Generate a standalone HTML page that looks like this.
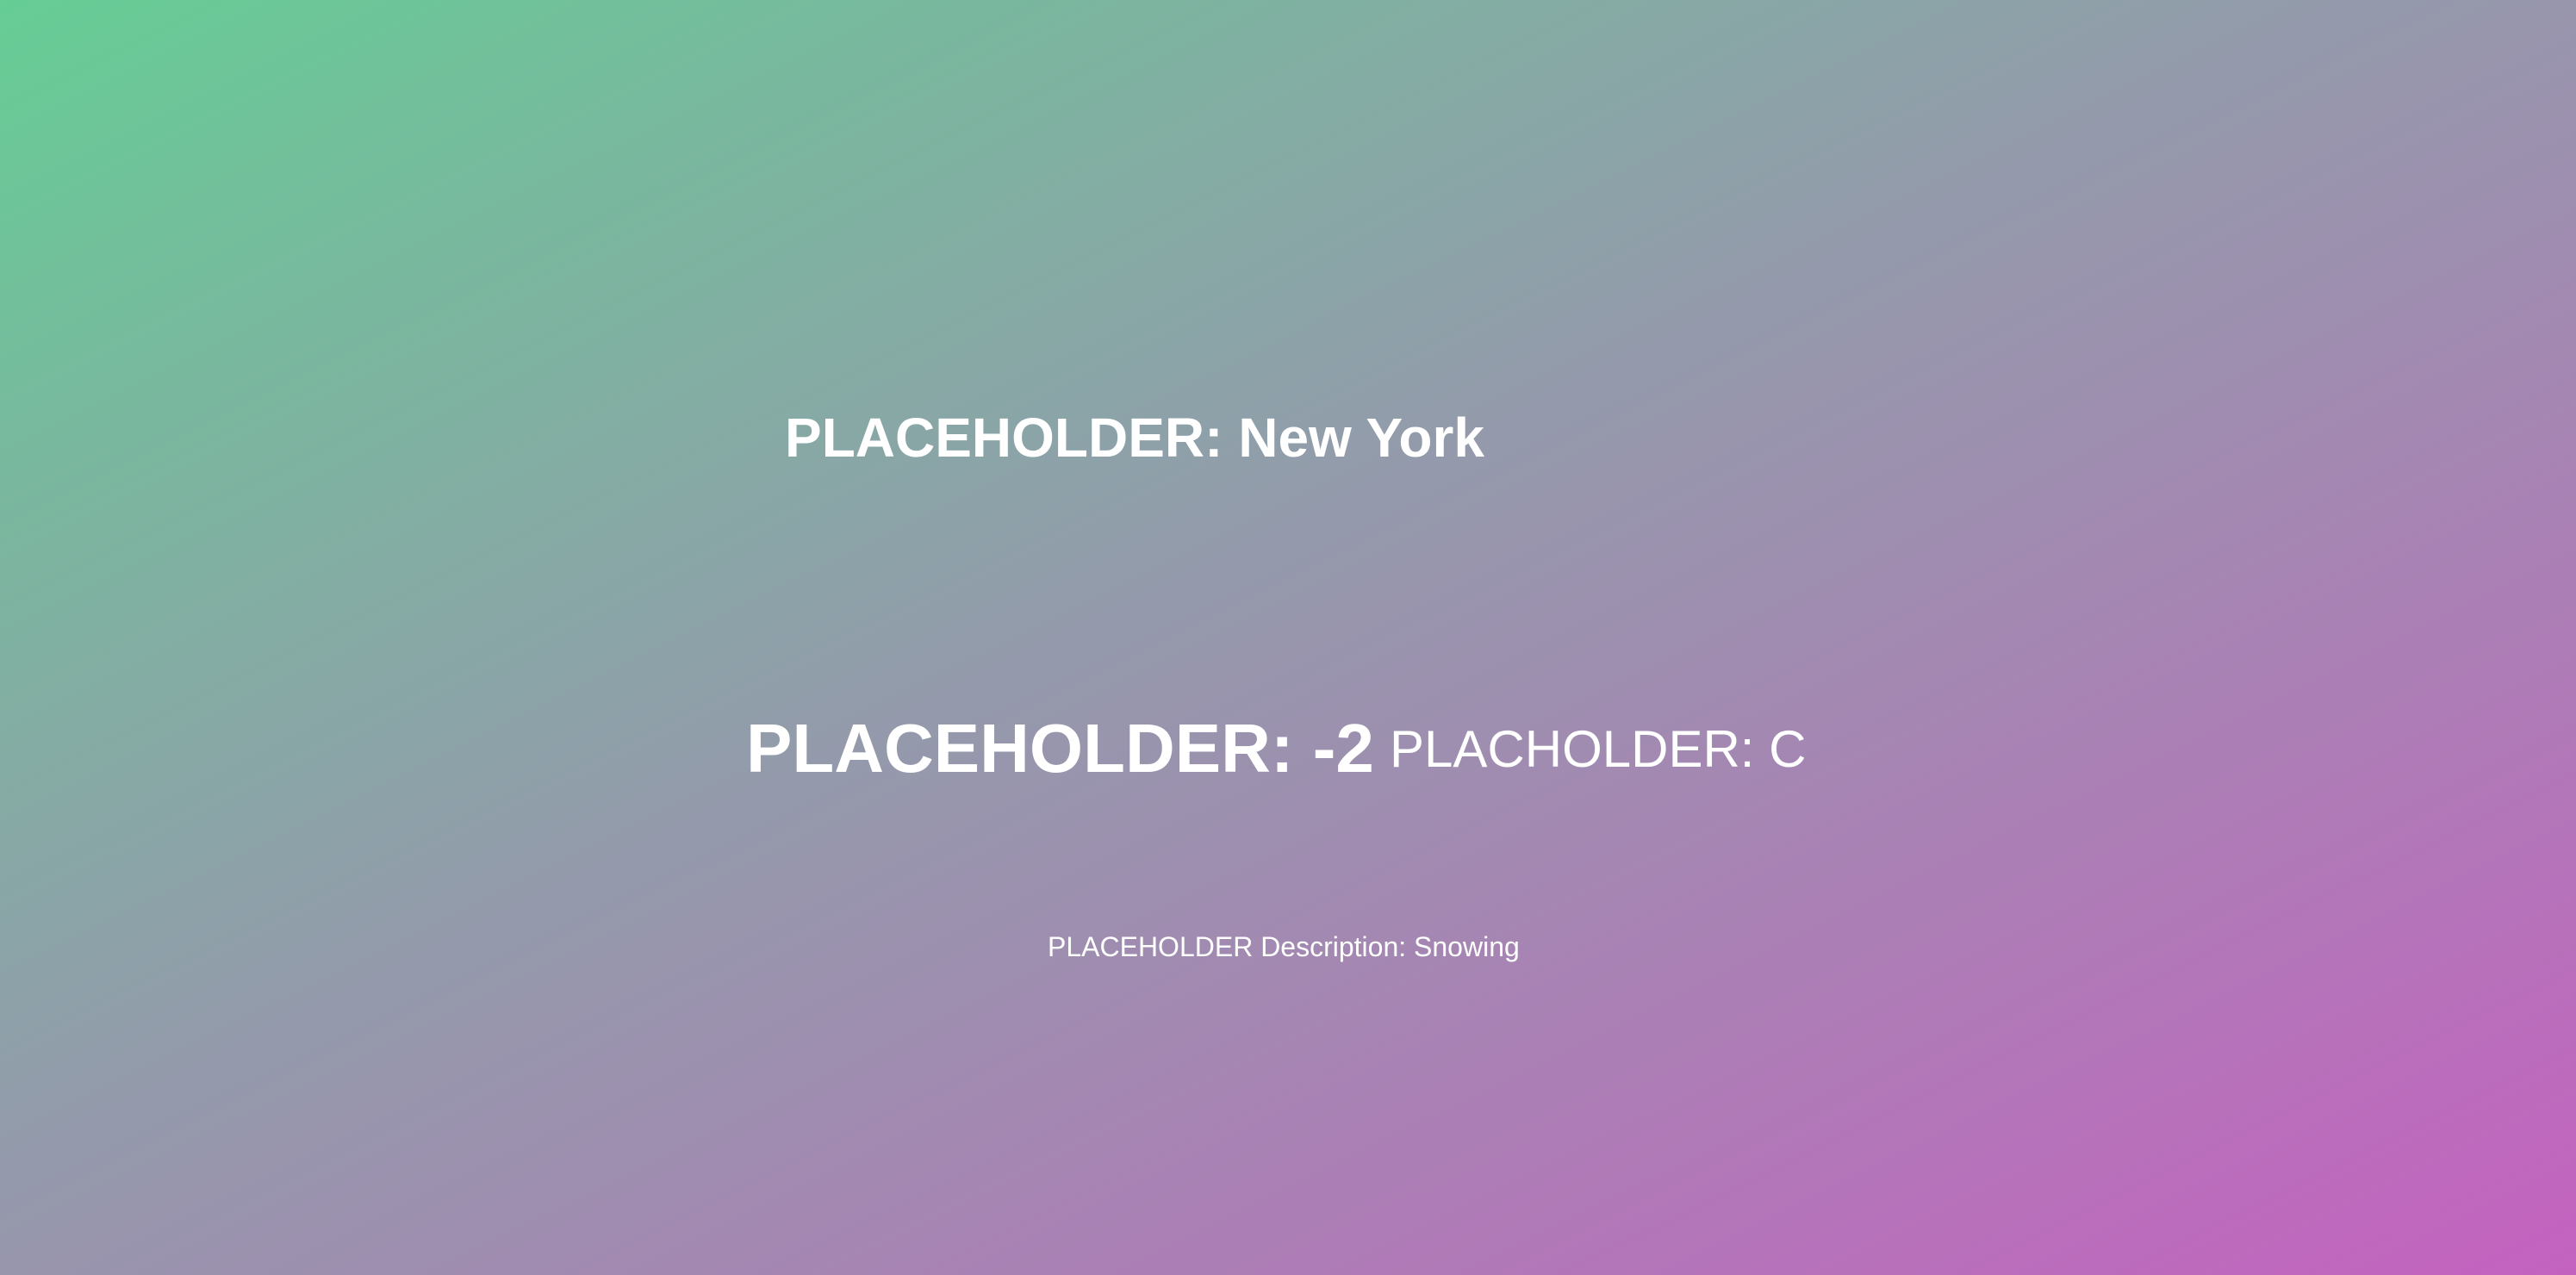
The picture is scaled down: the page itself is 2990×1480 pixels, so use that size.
<!DOCTYPE html>
<html><head><meta charset="utf-8"><style>
html,body{margin:0;padding:0;width:2990px;height:1480px;overflow:hidden;}
body{background:linear-gradient(to bottom right,#66cd95 0%,#939bab 45%,#c462c0 100%);font-family:"Liberation Sans",Arial,sans-serif;color:#fff;position:relative;}
div{position:absolute;line-height:1;white-space:nowrap;}
</style></head><body>
<div style="left:911px;top:476px;font-size:64px;font-weight:bold;">PLACEHOLDER: New York</div>
<div style="left:866px;top:829px;font-size:80px;font-weight:bold;">PLACEHOLDER: -2</div>
<div style="left:1613px;top:840px;font-size:60px;">PLACHOLDER: C</div>
<div style="left:1216px;top:1083px;font-size:32px;">PLACEHOLDER Description: Snowing</div>
</body></html>
